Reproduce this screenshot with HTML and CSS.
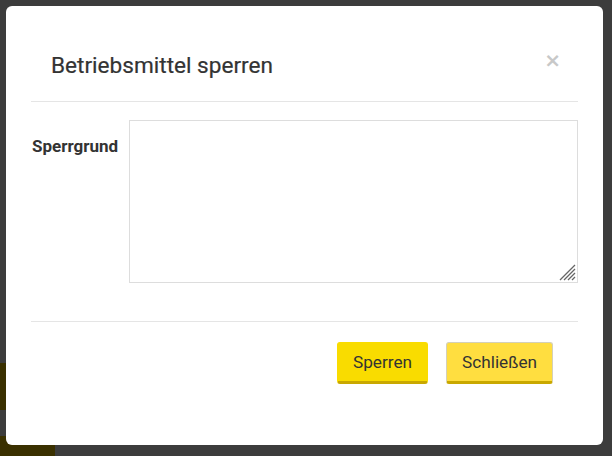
FILE: index.html
```html
<!DOCTYPE html>
<html lang="de">

<head>
  <meta charset="UTF-8">
  <meta name="viewport" content="width=device-width, initial-scale=1.0">
  <title>Betriebsmittel sperren</title>
  <link rel="stylesheet" href="styles.css">
</head>

<body>
  <div class="page">
    <div class="page-block first"></div>
    <div class="page-block second"></div>
  </div>

  <div class="overlay">
    <div class="modal">
      <div class="modal-header">
        <h4 class="modal-title">Betriebsmittel sperren</h4>
        <button type="button" class="close">&times;</button>
      </div>

      <form class="modal-body">
        <label for="sperrgrund">Sperrgrund</label>
        <div class="textarea-wrap">
          <textarea id="sperrgrund"></textarea>
          <!-- resize grip -->
          <svg class="grip" width="17" height="17" viewBox="0 0 17 17">
            <path d="M1 16 L16 1 M5 16 L16 5 M9 16 L16 9 M13 16 L16 13" stroke="#666" stroke-width="1.3" />
          </svg>
        </div>
      </form>

      <div class="modal-footer">
        <button type="button" class="btn btn-primary">Sperren</button>
        <button type="button" class="btn btn-default">Schließen</button>
      </div>
    </div>
  </div>
</body>

</html>
```

FILE: styles.css
```css
body {
  margin: 0;
  font-family: Roboto, "Liberation Sans", sans-serif;
  color: #333;
  background-color: #f0f0f0;
}

.page {
  height: 456px;
  padding-top: 363px;
  box-sizing: border-box;
}

.page-block {
  width: 55px;
  background-color: #e8c000;
}

.page-block.first {
  height: 47px;
}

.page-block.second {
  height: 30px;
  margin-top: 26px;
}

.overlay {
  position: fixed;
  top: 0;
  left: 0;
  right: 0;
  bottom: 0;
  background-color: rgba(0, 0, 0, 0.75);
  padding: 6px 9px 0 6px;
}

.modal {
  background-color: #fff;
  border-radius: 6px;
  height: 439px;
}

.modal-header {
  display: flex;
  justify-content: space-between;
  align-items: flex-start;
  margin: 0 25px;
  padding: 46px 20px 22px;
  border-bottom: 1px solid #e5e5e5;
}

.modal-title {
  margin: 0;
  font-size: 22.6px;
  font-weight: 400;
  line-height: 27px;
  -webkit-text-stroke: 0.2px #333;
}

.close {
  margin: -2px -3px 0 0;
  padding: 0;
  border: 0;
  background: none;
  font-family: "DejaVu Sans", sans-serif;
  font-size: 20px;
  font-weight: bold;
  line-height: 20px;
  color: #c8c8c8;
}

.modal-body {
  display: flex;
  align-items: flex-start;
  gap: 11px;
  margin: 0 25px;
  padding: 18px 0 38px 1px;
  border-bottom: 1px solid #e5e5e5;
}

.modal-body label {
  font-size: 17px;
  font-weight: bold;
  line-height: 20px;
  margin-top: 16px;
}

.textarea-wrap {
  position: relative;
  flex: 1;
  display: flex;
}

.textarea-wrap textarea {
  flex: 1;
  height: 163px;
  box-sizing: border-box;
  margin: 0;
  border: 1px solid #ddd;
  font-family: inherit;
  resize: none;
}

.grip {
  position: absolute;
  right: 2px;
  bottom: 2px;
  pointer-events: none;
}

.modal-footer {
  display: flex;
  justify-content: flex-end;
  gap: 18px;
  padding: 20px 50px 0 0;
}

.btn {
  height: 42px;
  padding: 0 15px;
  border: 1px solid transparent;
  border-bottom: 3px solid #c9a800;
  border-radius: 3px;
  font-family: inherit;
  font-size: 17.2px;
  color: #333;
}

.btn-primary {
  background-color: #f9dc00;
  border-color: #f9dc00 #f9dc00 #c9a800;
}

.btn-default {
  background-color: #ffde40;
  border-color: #d4d0b8 #d4d0b8 #c9a800;
}
```
